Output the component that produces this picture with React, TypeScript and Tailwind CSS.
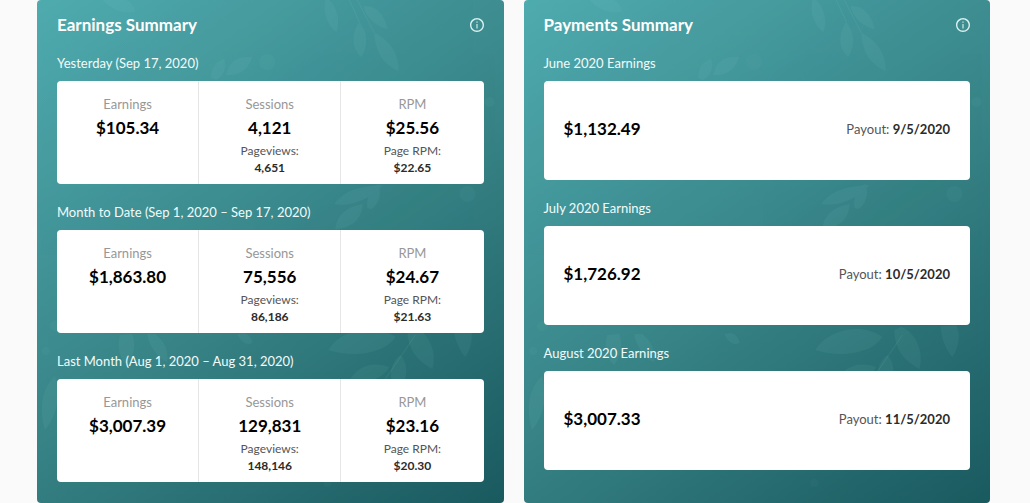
import React from 'react';

interface Period {
  label: string;
  earnings: string;
  sessions: string;
  pageviews: string;
  rpm: string;
  pageRpm: string;
}

interface Payment {
  label: string;
  amount: string;
  payout: string;
}

const periods: Period[] = [
  {
    label: 'Yesterday (Sep 17, 2020)',
    earnings: '$105.34',
    sessions: '4,121',
    pageviews: '4,651',
    rpm: '$25.56',
    pageRpm: '$22.65',
  },
  {
    label: 'Month to Date (Sep 1, 2020 – Sep 17, 2020)',
    earnings: '$1,863.80',
    sessions: '75,556',
    pageviews: '86,186',
    rpm: '$24.67',
    pageRpm: '$21.63',
  },
  {
    label: 'Last Month (Aug 1, 2020 – Aug 31, 2020)',
    earnings: '$3,007.39',
    sessions: '129,831',
    pageviews: '148,146',
    rpm: '$23.16',
    pageRpm: '$20.30',
  },
];

const payments: Payment[] = [
  { label: 'June 2020 Earnings', amount: '$1,132.49', payout: '9/5/2020' },
  { label: 'July 2020 Earnings', amount: '$1,726.92', payout: '10/5/2020' },
  { label: 'August 2020 Earnings', amount: '$3,007.33', payout: '11/5/2020' },
];

const InfoIcon = () => (
  <svg viewBox="2 2 20 20" className="size-3.5" fill="currentColor" aria-hidden="true">
    <path d="M11.2 7h1.6v1.8h-1.6zm0 3.6h1.6V17h-1.6zM12 2C6.48 2 2 6.48 2 12s4.48 10 10 10 10-4.48 10-10S17.52 2 12 2zm0 18c-4.41 0-8-3.59-8-8s3.59-8 8-8 8 3.59 8 8-3.59 8-8 8z" />
  </svg>
);

// Faint foliage behind the panel content
const Leaves = () => (
  <svg
    viewBox="0 0 466 503"
    preserveAspectRatio="none"
    className="absolute inset-0 size-full"
    fill="#8fd6d2"
    aria-hidden="true"
  >
    <g opacity="0.07">
      <path d="M322 22C314 34 314 48 324 57C331 45 330 33 322 22z" />
      <path d="M337 33C338 50 344 63 361 71C362 55 353 41 337 33z" />
      <path d="M326 6C338 5 347 14 350 29C338 26 329 18 326 6z" />
      <path d="M288 0C285 14 291 26 299 32C303 20 300 8 292 0z" />
      <path d="M189 75C192 61 200 56 215 57C211 69 203 76 189 75z" />
      <path d="M174 78C174 68 179 61 187 59C190 68 186 76 179 80z" />
      <path d="M66 0C74 10 86 14 98 12C96 4 92 0 88 0z" />
      <path d="M298 229C299 216 309 207 325 204C325 218 315 228 298 229z" />
      <path d="M330 208C329 196 333 188 341 184C345 195 341 204 334 209z" />
      <path d="M297 204C307 190 325 186 345 185C333 199 314 207 297 204z" />
      <path d="M291 350C304 329 337 322 358 337C347 354 316 358 291 350z" />
      <path d="M370 330C370 349 380 361 395 369C400 350 390 332 377 327z" />
      <path d="M416 326C417 340 422 351 428 357C435 346 436 334 432 325z" />
      <path d="M311 382C320 366 335 361 352 367C347 376 336 381 326 382z" />
      <path d="M354 380C352 368 356 361 363 355C370 363 370 372 367 381z" />
      <path d="M83 335C79 349 84 360 90 365C99 353 98 341 95 334z" />
      <path d="M110 334C112 346 120 358 130 362C132 350 126 340 118 334z" />
      <path d="M200 334C203 341 209 346 215 343C215 338 211 334 207 333z" />
      <path d="M8 430C2 411 4 389 18 376C24 396 20 415 8 430z" />
    </g>
    <path d="M346 382L378 335M312 0L322 22M320 0L337 33" fill="none" stroke="#8fd6d2" strokeOpacity="0.1" />
    <g opacity="0.04">
      <circle cx="18" cy="326" r="5" />
      <circle cx="9" cy="351" r="4" />
      <circle cx="430" cy="194" r="8" />
      <circle cx="290" cy="483" r="4" />
      <circle cx="452" cy="102" r="5" />
      <circle cx="230" cy="62" r="8" />
    </g>
  </svg>
);

interface PanelProps {
  title: string;
  children: React.ReactNode;
}

const Panel: React.FC<PanelProps> = ({ title, children }) => (
  <section className="relative overflow-hidden rounded bg-linear-145 from-[#4fabaf] via-[#398689] to-[#195a5f]">
    <Leaves />
    <div className="relative px-5 pt-[13px] pb-[21px]">
      <header className="mb-4 flex items-center justify-between">
        <h2 className="text-[17px] leading-6 font-bold text-white">{title}</h2>
        <button type="button" aria-label={`About ${title}`} className="text-[#d9f0f0]">
          <InfoIcon />
        </button>
      </header>
      <div className="flex flex-col gap-[18px]">{children}</div>
    </div>
  </section>
);

interface MetricProps {
  name: string;
  value: string;
  subName?: string;
  subValue?: string;
}

const Metric: React.FC<MetricProps> = ({ name, value, subName, subValue }) => (
  <div className="pt-[13px] pb-2 text-center">
    <p className="text-[13px] leading-5 text-[#979797]">{name}</p>
    <p className="text-[17px] leading-7 font-bold text-black">{value}</p>
    {subName && (
      <>
        <p className="text-xs leading-[17px] text-[#555]">{subName}</p>
        <p className="text-xs leading-[17px] font-bold text-[#2b2b2b]">{subValue}</p>
      </>
    )}
  </div>
);

const App: React.FC = () => {
  return (
    <main className="grid grid-cols-2 gap-5 bg-[#fafafa] pr-10 pl-[37px] font-['Lato',sans-serif]">
      <Panel title="Earnings Summary">
        {periods.map((period) => (
          <div key={period.label}>
            <h3 className="mb-2 text-[13px] leading-5 text-[#f2fbfb]">{period.label}</h3>
            <div className="grid grid-cols-3 divide-x divide-[#e6e6e6] rounded bg-white">
              <Metric name="Earnings" value={period.earnings} />
              <Metric name="Sessions" value={period.sessions} subName="Pageviews:" subValue={period.pageviews} />
              <Metric name="RPM" value={period.rpm} subName="Page RPM:" subValue={period.pageRpm} />
            </div>
          </div>
        ))}
      </Panel>

      <Panel title="Payments Summary">
        {payments.map((payment) => (
          <div key={payment.label}>
            <h3 className="mb-2 text-[13px] leading-5 text-[#f2fbfb]">{payment.label}</h3>
            <div className="flex items-center justify-between rounded bg-white px-5 pt-[33px] pb-[37px]">
              <p className="text-[17px] leading-[29px] font-bold text-black">{payment.amount}</p>
              <p className="text-[13px] leading-5 text-[#555]">
                Payout: <strong className="font-bold text-[#2b2b2b]">{payment.payout}</strong>
              </p>
            </div>
          </div>
        ))}
      </Panel>
    </main>
  );
};

export default App;
